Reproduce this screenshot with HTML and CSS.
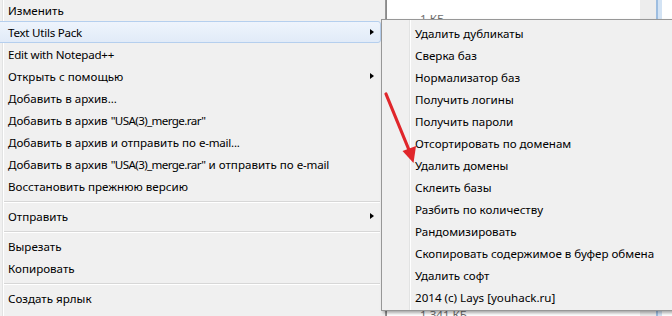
FILE: index.html
```html
<!DOCTYPE html>
<html lang="ru">
  <head>
    <meta charset="UTF-8" />
    <meta name="viewport" content="width=device-width, initial-scale=1.0" />
    <title>Text Utils Pack</title>
    <link rel="stylesheet" href="styles.css">
  </head>
  <body>
    <div class="desktop">
      <ul class="menu main-menu">
        <li class="item">Изменить</li>
        <li class="item hover"><span class="tight">Text Utils Pack</span> <span class="arrow"></span></li>
        <li class="item"><span class="tight">Edit with Notepad++</span></li>
        <li class="item">Открыть с помощью <span class="arrow"></span></li>
        <li class="item">Добавить в архив...</li>
        <li class="item"><span>Добавить в архив <span class="lat">"USA(3)_merge.rar"</span></span></li>
        <li class="item"><span>Добавить в архив и отправить по <span class="tight">e-mail...</span></span></li>
        <li class="item"><span>Добавить в архив <span class="lat">"USA(3)_merge.rar"</span> и отправить по <span class="tight">e-mail</span></span></li>
        <li class="item">Восстановить прежнюю версию</li>
        <li class="separator"></li>
        <li class="item">Отправить <span class="arrow"></span></li>
        <li class="separator"></li>
        <li class="item">Вырезать</li>
        <li class="item">Копировать</li>
        <li class="separator"></li>
        <li class="item">Создать ярлык</li>
        <li class="item">Удалить</li>
      </ul>

      <div class="file-list">
        <div class="file-row">
          <span class="size">1 КБ</span>
          <span class="scroll"></span>
        </div>
        <div class="file-row">
          <span class="size">1 341 КБ</span>
          <span class="scroll"></span>
        </div>
      </div>

      <ul class="menu sub-menu">
        <li class="item">Удалить дубликаты</li>
        <li class="item">Сверка баз</li>
        <li class="item">Нормализатор баз</li>
        <li class="item">Получить логины</li>
        <li class="item">Получить пароли</li>
        <li class="item">Отсортировать по доменам</li>
        <li class="item">Удалить домены</li>
        <li class="item">Склеить базы</li>
        <li class="item">Разбить по количеству</li>
        <li class="item">Рандомизировать</li>
        <li class="item">Скопировать содержимое в буфер обмена</li>
        <li class="item">Удалить софт</li>
        <li class="item">2014 (c) Lays [youhack.ru]</li>
      </ul>

      <!-- red pointer drawn on top of the screenshot -->
      <svg class="pointer" width="672" height="316" viewBox="0 0 672 316">
        <line x1="386" y1="94" x2="409" y2="150" stroke="#e0262b" stroke-width="3.2" stroke-linecap="round" />
        <polygon points="413.5,163 402.5,151 416,146" fill="#e0262b" />
      </svg>
    </div>
  </body>
</html>
```

FILE: styles.css
```css
body {
  margin: 0;
  padding: 0;
  background-color: #ffffff;
  font-family: "Noto Sans", "Open Sans", sans-serif;
  font-size: 11.6px;
  color: #000;
}

.desktop {
  position: relative;
  display: flex;
  width: 672px;
  height: 316px;
  overflow: hidden;
}

ul {
  list-style-type: none;
  margin: 0;
  padding: 0;
}

.menu {
  background-color: #f0f0f0;
}

.item {
  display: flex;
  align-items: center;
  justify-content: space-between;
  height: 22px;
  box-sizing: border-box;
  white-space: nowrap;
}

/* latin words are narrower in the original menu font */
.lat {
  letter-spacing: -0.6px;
}

.tight {
  letter-spacing: -0.25px;
}

.arrow {
  width: 0;
  height: 0;
  border-top: 3.5px solid transparent;
  border-bottom: 3.5px solid transparent;
  border-left: 4px solid #000;
  margin-right: 7px;
}

.separator {
  height: 8px;
  box-sizing: border-box;
  padding-top: 4px;
  margin-left: 4px;
  margin-right: 5px;
}

.separator::before {
  content: "";
  display: block;
  height: 1px;
  background-color: #d7d7d7;
  border-bottom: 1px solid #ffffff;
}

/* main context menu */
.main-menu {
  width: 385px;
  flex-shrink: 0;
  margin-top: -1px;
  border-right: 1px solid #979797;
  background-image: linear-gradient(
    to right,
    #f0f0f0 2px,
    #e2e3e3 2px,
    #e2e3e3 3px,
    #ffffff 3px,
    #ffffff 4px,
    #f0f0f0 4px
  );
}

.main-menu .item {
  padding-left: 8px;
  margin-right: 4px;
}

.main-menu .hover {
  margin-left: -4px;
  padding-left: 11px;
  border: 1px solid #b5cfee;
  border-radius: 3px;
  background: linear-gradient(to bottom, #eef4fc, #e1ebf8);
}

.main-menu .hover .arrow {
  margin-right: 6px;
}

/* file list behind the menus */
.file-list {
  flex: 1;
  display: flex;
  flex-direction: column;
  justify-content: space-between;
  border-left: 1px solid #8a8a8a;
  color: #6d6d6d;
}

.file-row {
  display: flex;
  justify-content: space-between;
  height: 22px;
}

.file-row:first-child {
  align-items: flex-end;
  margin-top: 4px;
}

.file-row:last-child {
  align-items: flex-start;
  margin-bottom: -13px;
  padding-top: 1px;
}

.size {
  margin-left: 33px;
}

.scroll {
  width: 22px;
  align-self: stretch;
  margin-right: 10px;
  background-image: linear-gradient(
    to right,
    #ededed 16px,
    #9dbde0 16px,
    #9dbde0 18px,
    #d3e3f4 18px
  );
}

.file-row:first-child .scroll {
  margin-top: -6px;
}

/* Text Utils Pack submenu */
.sub-menu {
  position: absolute;
  left: 381px;
  top: 19px;
  width: 300px;
  padding: 2px 0;
  border: 1px solid #979797;
  box-shadow: 2px 2px 3px rgba(0, 0, 0, 0.35);
  background-image: linear-gradient(
    to right,
    #f0f0f0 27px,
    #e2e3e3 27px,
    #e2e3e3 28px,
    #ffffff 28px,
    #ffffff 29px,
    #f0f0f0 29px
  );
}

.sub-menu .item {
  padding-left: 33px;
}

.pointer {
  position: absolute;
  left: 0;
  top: 0;
  pointer-events: none;
}
```
